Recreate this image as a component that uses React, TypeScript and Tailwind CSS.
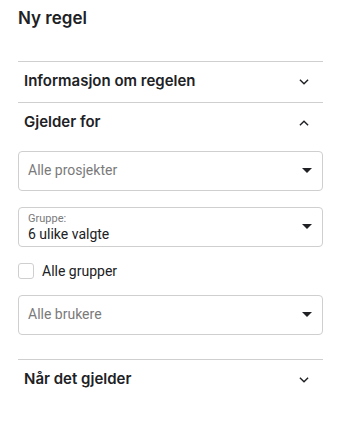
import React from "react";

const Chevron = ({ up }: { up?: boolean }) => (
  <svg width="14" height="14" viewBox="0 0 24 24" className="text-[#202124]">
    {up ? (
      <path d="M5 16 L12 9 L19 16" fill="none" stroke="currentColor" strokeWidth="2.4" />
    ) : (
      <path d="M5 8 L12 15 L19 8" fill="none" stroke="currentColor" strokeWidth="2.4" />
    )}
  </svg>
);

const Caret = () => (
  <svg width="10" height="6" viewBox="0 0 10 6" className="text-[#202124]">
    <path d="M0 0 L10 0 L5 5 Z" fill="currentColor" />
  </svg>
);

const Header = ({ title, up }: { title: string; up?: boolean }) => (
  <div className="flex h-[40px] items-center justify-between pl-[6px] pr-[12px]">
    <span className="text-[15px] font-semibold text-[#202124]" style={{ fontFamily: "Inter, 'Noto Sans', sans-serif" }}>
      {title}
    </span>
    <Chevron up={up} />
  </div>
);

const Select = ({ placeholder }: { placeholder: string }) => (
  <div className="flex h-[40px] items-center justify-between rounded-[4px] border border-[#cfcfcf] pl-[9px] pr-[10px]">
    <span className="text-[14px] text-[#7a7a7a]">{placeholder}</span>
    <Caret />
  </div>
);

export default function App() {
  return (
    <div className="min-h-[428px] w-[348px] bg-white pl-[18px] pr-[25px]" style={{ fontFamily: "Roboto, 'Liberation Sans', sans-serif" }}>
      <div className="pt-[6px] text-[17px] font-semibold text-[#202124]" style={{ fontFamily: "Inter, 'Noto Sans', sans-serif" }}>
        Ny regel
      </div>
      <div className="mt-[29px] border-t border-[#cfcfcf]">
        <Header title="Informasjon om regelen" />
      </div>
      <div className="border-t border-[#cfcfcf]">
        <Header title="Gjelder for" up />
        <div className="mt-[8px] flex flex-col">
          <Select placeholder="Alle prosjekter" />
          <div className="mt-[16px] flex h-[40px] items-center justify-between rounded-[4px] border border-[#cfcfcf] pl-[9px] pr-[10px]">
            <div className="flex flex-col leading-none">
              <span className="text-[11px] text-[#7a7a7a]">Gruppe:</span>
              <span className="mt-[3px] text-[14px] text-[#202124]">6 ulike valgte</span>
            </div>
            <Caret />
          </div>
          <label className="mt-[16px] flex h-[16px] items-center gap-[8px]">
            <span className="h-[16px] w-[16px] rounded-[3px] border border-[#cfcfcf] bg-white" />
            <span className="text-[14px] leading-none text-[#202124]">Alle grupper</span>
          </label>
          <div className="mt-[16px]">
            <Select placeholder="Alle brukere" />
          </div>
        </div>
      </div>
      <div className="mt-[24px] border-t border-[#cfcfcf]">
        <Header title="Når det gjelder" />
      </div>
    </div>
  );
}
